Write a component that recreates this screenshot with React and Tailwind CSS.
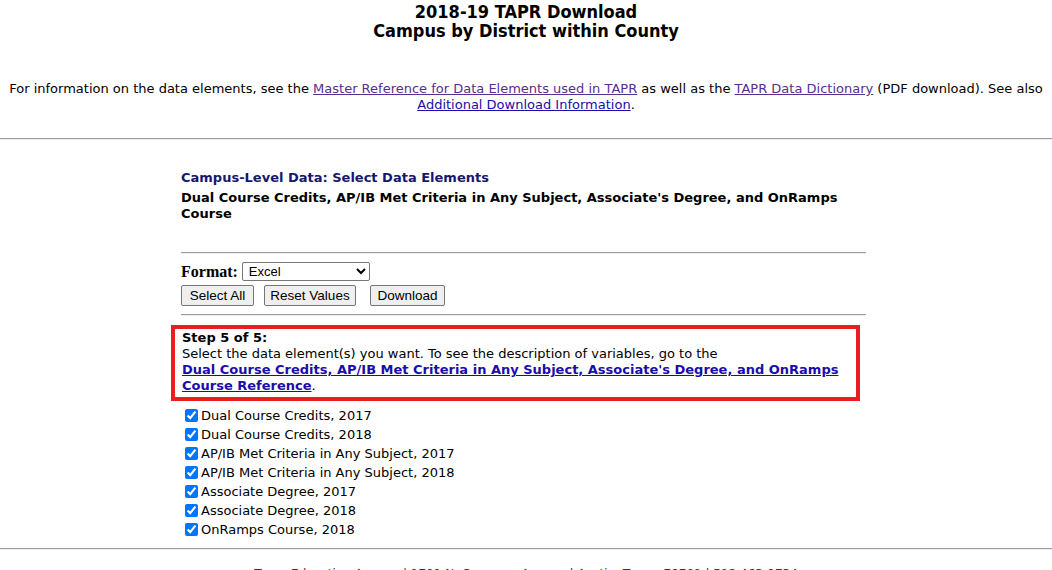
import { useState } from "react";

const verdana = "font-['DejaVu_Sans','Verdana',sans-serif]";
const tahoma = "font-['DejaVu_Sans_Condensed','Tahoma',sans-serif]";

const items = [
  "Dual Course Credits, 2017",
  "Dual Course Credits, 2018",
  "AP/IB Met Criteria in Any Subject, 2017",
  "AP/IB Met Criteria in Any Subject, 2018",
  "Associate Degree, 2017",
  "Associate Degree, 2018",
  "OnRamps Course, 2018",
];

const buttons = [
  { label: "Select All", cls: "w-[73px]" },
  { label: "Reset Values", cls: "w-[92px] ml-[10px]" },
  { label: "Download", cls: "w-[75px] ml-[14px]" },
];

function Rule({ className = "" }) {
  return <div className={"h-[2px] border-t border-t-[#9b9b9b] border-b border-b-[#eeeeee] " + className} />;
}

export default function App() {
  const [checked, setChecked] = useState(items.map(() => true));

  return (
    <div className={"bg-white text-black text-[13px] leading-[16px] " + verdana}>
      <div className={"pt-[2px] text-center font-bold text-[18px] leading-[19px] " + tahoma}>
        <div>2018-19 TAPR Download</div>
        <div>Campus by District within County</div>
      </div>

      <p className="mt-[41px] text-center px-1">
        For information on the data elements, see the{" "}
        <a href="#" className="underline text-[#5a2d91]">Master Reference for Data Elements used in TAPR</a> as well as
        the <a href="#" className="underline text-[#5a2d91]">TAPR Data Dictionary</a> (PDF download). See also{" "}
        <a href="#" className="underline text-[#1a0dab]">Additional Download Information</a>.
      </p>

      <Rule className="mt-[25px]" />

      <div className="w-[685px] ml-[181px]">
        <div className="mt-[30px] font-bold text-[#17176b]">Campus-Level Data: Select Data Elements</div>
        <div className="mt-[4px] font-bold pr-[20px]">
          Dual Course Credits, AP/IB Met Criteria in Any Subject, Associate's Degree, and OnRamps Course
        </div>

        <Rule className="mt-[30px]" />

        <div className="mt-[8px] flex items-center h-[19px]">
          <span className="font-['Liberation_Serif',serif] font-bold text-[16px] mr-[4px]">Format:</span>
          <select
            defaultValue="Excel"
            className="h-[19px] w-[128px] border border-[#767676] rounded-[2px] bg-white text-[13px] font-['Liberation_Sans',Arial,sans-serif] pl-[2px]"
          >
            <option>Excel</option>
            <option>CSV</option>
          </select>
        </div>

        <div className="mt-[4px] flex font-['Liberation_Sans',Arial,sans-serif] text-[13.5px]">
          {buttons.map((b, i) => (
            <button
              key={b.label}
              onClick={() => setChecked(items.map(() => i !== 1))}
              className={"h-[21px] bg-[#efefef] border border-[#767676] rounded-[2px] leading-none " + b.cls}
            >
              {b.label}
            </button>
          ))}
        </div>

        <Rule className="mt-[8px]" />

        <div className="mt-[9px] ml-[-10px] w-[689px] border-4 border-[#ec1c24] pl-[7px] pr-[6px] pt-[1px] pb-[3px]">
          <div className="font-bold">Step 5 of 5:</div>
          <div>Select the data element(s) you want. To see the description of variables, go to the</div>
          <div>
            <a href="#" className="font-bold underline text-[#1a0dab]">
              Dual Course Credits, AP/IB Met Criteria in Any Subject, Associate's Degree, and OnRamps Course Reference
            </a>
            .
          </div>
        </div>

        <div className="mt-[5px]">
          {items.map((label, i) => (
            <label key={label} className="flex items-center h-[19px]">
              <input
                type="checkbox"
                checked={checked[i]}
                onChange={() => setChecked(checked.map((c, j) => (j === i ? !c : c)))}
                className="ml-[4px] mr-[3px] w-[13px] h-[13px]"
              />
              {label}
            </label>
          ))}
        </div>
      </div>

      <Rule className="mt-[9px]" />

      <p className="mt-[16px] text-center text-[12px] text-[#333]">
        Texas Education Agency | 1701 N. Congress Avenue | Austin, Texas, 78701 | 512 463-9734
      </p>
    </div>
  );
}
